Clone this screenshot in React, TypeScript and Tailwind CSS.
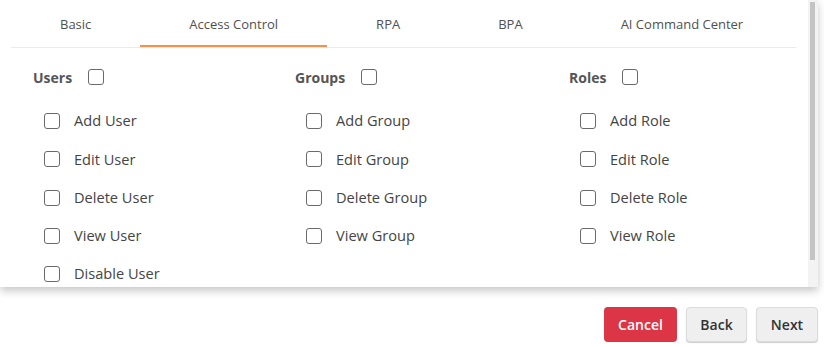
import React from "react";

const tabs = ["Basic", "Access Control", "RPA", "BPA", "AI Command Center"];

const columns = [
  { title: "Users", items: ["Add User", "Edit User", "Delete User", "View User", "Disable User"], w: "w-[262px]" },
  { title: "Groups", items: ["Add Group", "Edit Group", "Delete Group", "View Group"], w: "w-[274px]" },
  { title: "Roles", items: ["Add Role", "Edit Role", "Delete Role", "View Role"], w: "w-[200px]" },
];

function Box() {
  return (
    <input
      type="checkbox"
      className="appearance-none w-[16px] h-[16px] shrink-0 border-[1.5px] border-[#6a6a6a] rounded-[3px] bg-white m-0"
    />
  );
}

export default function App() {
  return (
    <div
      className="w-[824px] h-[347px] bg-white relative overflow-hidden"
      style={{ fontFamily: '"Open Sans", "Noto Sans", sans-serif' }}
    >
      <div className="w-[818px] h-[287px] bg-white flex shadow-[0_4px_8px_rgba(0,0,0,0.22)] overflow-hidden">
        <div className="flex-1 flex flex-col min-w-0">
          <div className="ml-[11px] w-[785px] shrink-0 flex border-b border-[#ebebeb]">
            {tabs.map((t, i) => (
              <div
                key={t}
                className={
                  "h-[47px] shrink-0 whitespace-nowrap flex items-center pt-[3px] px-[49px] text-[13px] text-[#505050] " +
                  (i === 1 ? "shadow-[inset_0_-2px_0_#f7904a]" : "")
                }
              >
                {t}
              </div>
            ))}
          </div>
          <div className="flex shrink-0 pl-[33px] pt-[19px]">
            {columns.map((c) => (
              <div key={c.title} className={c.w + " flex flex-col"}>
                <div className="h-[20px] flex items-center gap-[16px]">
                  <span className="text-[14px] font-bold text-[#555]">{c.title}</span>
                  <Box />
                </div>
                <div className="mt-[15px] pl-[11px] flex flex-col">
                  {c.items.map((it) => (
                    <div key={it} className="h-[38.3px] flex items-center gap-[14px]">
                      <Box />
                      <span className="text-[14.6px] text-[#444]">{it}</span>
                    </div>
                  ))}
                </div>
              </div>
            ))}
          </div>
        </div>
        <div className="w-[10px] bg-[#f3f3f3] pt-[2px] pl-[2px] pr-[3px]">
          <div className="h-[258px] bg-[#c4c4c4]" />
        </div>
      </div>
      <div className="flex justify-end gap-[9px] pr-[6px] mt-[20px]">
        <button className="w-[73px] h-[35px] rounded-[4px] bg-[#dc3545] text-white text-[14px] font-semibold">
          Cancel
        </button>
        <button className="w-[61px] h-[35px] rounded-[4px] bg-[#efefef] border border-[#dcdcdc] shadow-[0_1px_1px_rgba(0,0,0,0.2)] text-[#333] text-[14px] font-semibold">
          Back
        </button>
        <button className="w-[62px] h-[35px] rounded-[4px] bg-[#efefef] border border-[#dcdcdc] shadow-[0_1px_1px_rgba(0,0,0,0.2)] text-[#333] text-[14px] font-semibold">
          Next
        </button>
      </div>
    </div>
  );
}
